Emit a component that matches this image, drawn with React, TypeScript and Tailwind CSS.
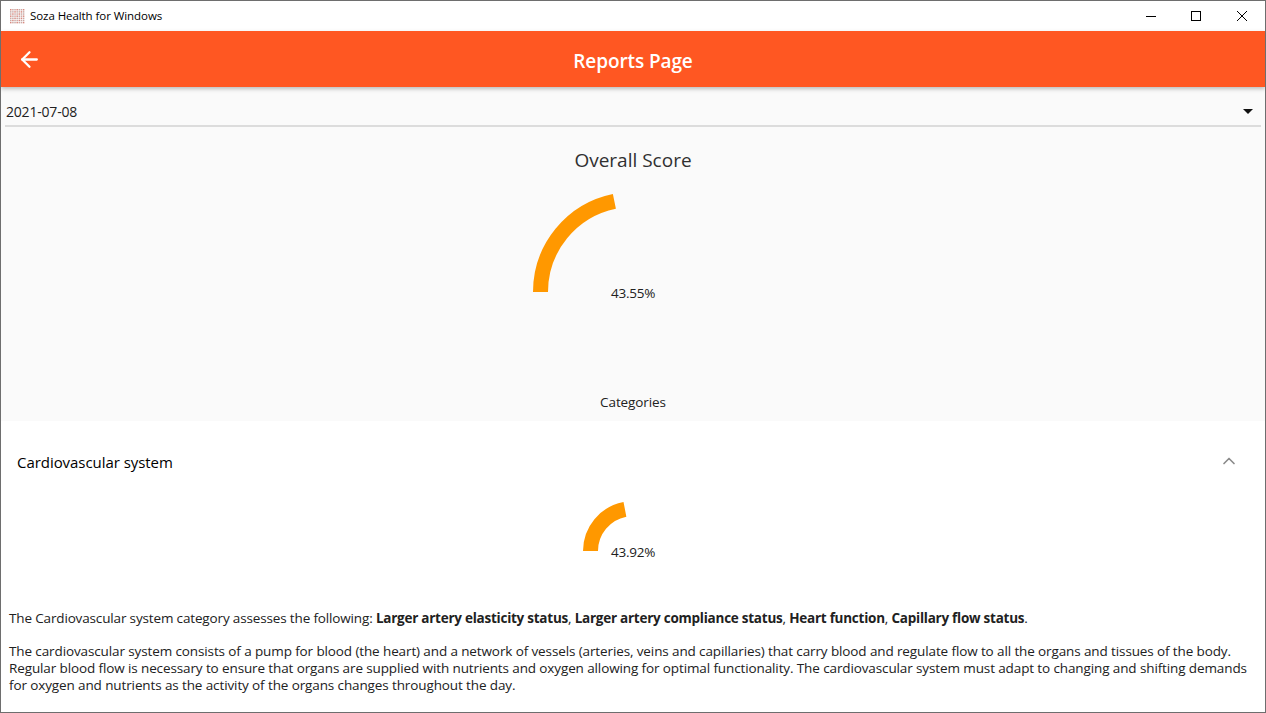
import React from 'react';
import { ArrowLeft, ChevronUp } from 'lucide-react';

const FONT = "font-['Open_Sans','Noto_Sans',sans-serif]";

// half circle gauge, sweeps clockwise from the left side
const Gauge: React.FC<{ radius: number; value: number }> = ({ radius, value }) => {
  const mid = radius - 7.5;
  const angle = (value / 100) * Math.PI;
  const x = radius - mid * Math.cos(angle);
  const y = radius - mid * Math.sin(angle);
  return (
    <svg width={radius * 2} height={radius} className="block">
      <path d={`M ${radius - mid} ${radius} A ${mid} ${mid} 0 0 1 ${x} ${y}`} fill="none" stroke="#FF9800" strokeWidth="15" />
    </svg>
  );
};

const IconGrid = () => {
  const cells = [];
  for (let r = 0; r < 7; r++) {
    for (let c = 0; c < 7; c++) {
      cells.push(<rect key={`${r}-${c}`} x={c * 2} y={r * 2} width="1.4" height="1.4" fill={(r + c) % 3 === 0 ? '#d98a80' : '#c9a9a4'} />);
    }
  }
  return <svg width="15" height="15" viewBox="0 0 14 14">{cells}</svg>;
};

const Bold: React.FC<{ children: React.ReactNode }> = ({ children }) => (
  <b className="tracking-[-0.25px]">{children}</b>
);

const App: React.FC = () => {
  return (
    <div className={`${FONT} w-[1266px] h-[713px] overflow-hidden border border-[#6e6e6e] bg-white flex flex-col text-[#212121]`}>
      <div className="h-[30px] flex items-center bg-white shrink-0">
        <div className="ml-[9px] mr-[5px] flex"><IconGrid /></div>
        <span className="text-[11.5px] tracking-[-0.07px] text-black">Soza Health for Windows</span>
        <div className="ml-auto flex items-center">
          <div className="w-[46px] flex justify-center -mr-[1px]">
            <svg width="10" height="10" viewBox="0 0 10 10"><path d="M0 5.5h10" stroke="#000" strokeWidth="1" /></svg>
          </div>
          <div className="w-[46px] flex justify-center">
            <svg width="10" height="10" viewBox="0 0 10 10"><rect x="0.5" y="0.5" width="9" height="9" fill="none" stroke="#000" strokeWidth="1" /></svg>
          </div>
          <div className="w-[46px] flex justify-center">
            <svg width="10" height="10" viewBox="0 0 10 10"><path d="M0 0l10 10M10 0L0 10" stroke="#000" strokeWidth="1" /></svg>
          </div>
        </div>
      </div>

      <div className="h-[56px] shrink-0 bg-[#FF5722] relative z-10 shadow-[0_2px_4px_rgba(0,0,0,0.25)] flex items-center justify-center">
        <ArrowLeft size={25} strokeWidth={2.2} color="white" className="absolute left-[16px] top-[16px]" />
        <h1 className="text-[19px] font-semibold text-white tracking-[-0.1px] mt-[4px]">Reports Page</h1>
      </div>

      <div className="h-[334px] shrink-0 bg-[#fafafa] flex flex-col">
        <div className="h-[40px] mx-[4px] border-b-2 border-[#dcdcdc] flex items-center justify-between shrink-0 pt-[10px]">
          <span className="ml-[1px] text-[14px] tracking-[-0.2px]">2021-07-08</span>
          <svg width="10" height="5" viewBox="0 0 10 5" className="mr-[8px]"><path d="M0 0h10L5 5z" fill="#111" /></svg>
        </div>
        <div className="text-center text-[19px] leading-[24px] mt-[21px] text-[#303030]">Overall Score</div>
        <div className="relative mt-[20px] flex justify-center">
          <Gauge radius={100} value={43.55} />
          <span className="absolute left-1/2 -translate-x-1/2 top-[92px] text-[13.5px] leading-[18px] tracking-[-0.25px]">43.55%</span>
        </div>
        <div className="text-center text-[13.5px] leading-[18px] tracking-[-0.1px] mt-[101px]">Categories</div>
      </div>

      <div className="flex-1 bg-white">
        <div className="h-[84px] pl-[16px] pr-[26px] pb-[2px] flex items-center justify-between">
          <span className="text-[15px] tracking-[-0.05px] text-black">Cardiovascular system</span>
          <ChevronUp size={20} strokeWidth={2} color="#8a8a8a" className="mb-[2px]" />
        </div>
        <div className="relative flex justify-center -mt-[4px]">
          <Gauge radius={50} value={43.92} />
          <span className="absolute left-1/2 -translate-x-1/2 top-[42px] text-[13.5px] leading-[18px] tracking-[-0.25px]">43.92%</span>
        </div>
        <div className="px-[8px] mt-[59px] text-[13.5px] leading-[17px] tracking-[-0.15px] text-[#212121]">
          <p>
            The Cardiovascular system category assesses the following: <Bold>Larger artery elasticity status</Bold>, <Bold>Larger artery compliance status</Bold>, <Bold>Heart function</Bold>, <Bold>Capillary flow status</Bold>.
          </p>
          <p className="mt-[16px] tracking-[-0.115px]">
            The cardiovascular system consists of a pump for blood (the heart) and a network of vessels (arteries, veins and capillaries) that carry blood and regulate flow to all the organs and tissues of the body. Regular blood flow is necessary to ensure that organs are supplied with nutrients and oxygen allowing for optimal functionality. The cardiovascular system must adapt to changing and shifting demands for oxygen and nutrients as the activity of the organs changes throughout the day.
          </p>
        </div>
      </div>
    </div>
  );
};

export default App;
